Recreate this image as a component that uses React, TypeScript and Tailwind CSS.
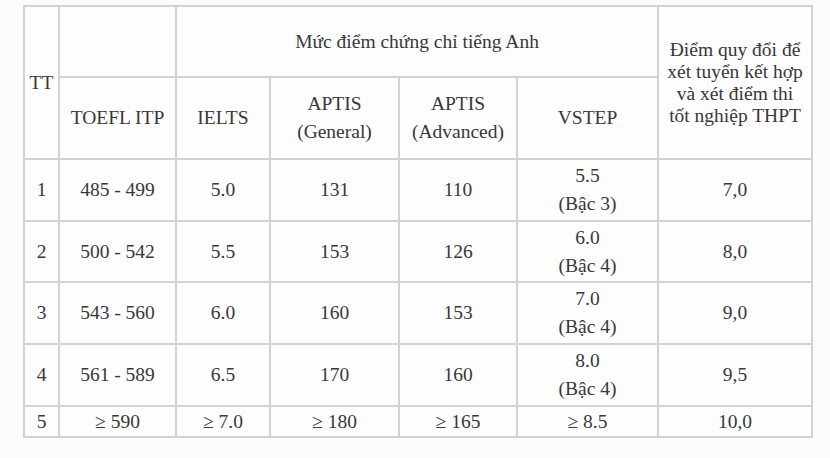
import React from "react";

const rows = [
  ["1", "485 - 499", "5.0", "131", "110", ["5.5", "(Bậc 3)"], "7,0"],
  ["2", "500 - 542", "5.5", "153", "126", ["6.0", "(Bậc 4)"], "8,0"],
  ["3", "543 - 560", "6.0", "160", "153", ["7.0", "(Bậc 4)"], "9,0"],
  ["4", "561 - 589", "6.5", "170", "160", ["8.0", "(Bậc 4)"], "9,5"],
] as const;

const cell = "border-2 border-[#d2d2d2] text-center align-middle p-0 font-['Liberation_Serif','Times_New_Roman',serif]";

export default function App() {
  return (
    <div className="w-[830px] h-[458px] bg-[#fbfbfb] pt-[5px] pl-[23px] text-[#383838] overflow-hidden font-['Liberation_Serif','Times_New_Roman',serif]">
      <table className="table-fixed border-collapse bg-[#fdfdfd] w-[788px] text-[19.5px] leading-[28px] font-['Liberation_Serif','Times_New_Roman',serif]">
        <colgroup>
          <col className="w-[35px]" />
          <col className="w-[117px]" />
          <col className="w-[94px]" />
          <col className="w-[129px]" />
          <col className="w-[118px]" />
          <col className="w-[141px]" />
          <col className="w-[154px]" />
        </colgroup>
        <tbody>
          <tr className="h-[71px]">
            <td rowSpan={2} className={cell}>TT</td>
            <td className={cell}></td>
            <td colSpan={4} className={cell}>Mức điểm chứng chỉ tiếng Anh</td>
            <td rowSpan={2} className={cell + " leading-[22px]"}>
              Điểm quy đổi để<br />xét tuyển kết hợp<br />và xét điểm thi<br />tốt nghiệp THPT
            </td>
          </tr>
          <tr className="h-[82px]">
            <td className={cell}>TOEFL ITP</td>
            <td className={cell}>IELTS</td>
            <td className={cell}>APTIS<br />(General)</td>
            <td className={cell}>APTIS<br />(Advanced)</td>
            <td className={cell}>VSTEP</td>
          </tr>
          {rows.map((r, i) => (
            <tr key={i} className={i === 1 ? "h-[61px]" : "h-[62px]"}>
              <td className={cell}>{r[0]}</td>
              <td className={cell}>{r[1]}</td>
              <td className={cell}>{r[2]}</td>
              <td className={cell}>{r[3]}</td>
              <td className={cell}>{r[4]}</td>
              <td className={cell}>{r[5][0]}<br />{r[5][1]}</td>
              <td className={cell}>{r[6]}</td>
            </tr>
          ))}
          <tr className="h-[31px]">
            <td className={cell}>5</td>
            <td className={cell}>≥ 590</td>
            <td className={cell}>≥ 7.0</td>
            <td className={cell}>≥ 180</td>
            <td className={cell}>≥ 165</td>
            <td className={cell}>≥ 8.5</td>
            <td className={cell}>10,0</td>
          </tr>
        </tbody>
      </table>
    </div>
  );
}
